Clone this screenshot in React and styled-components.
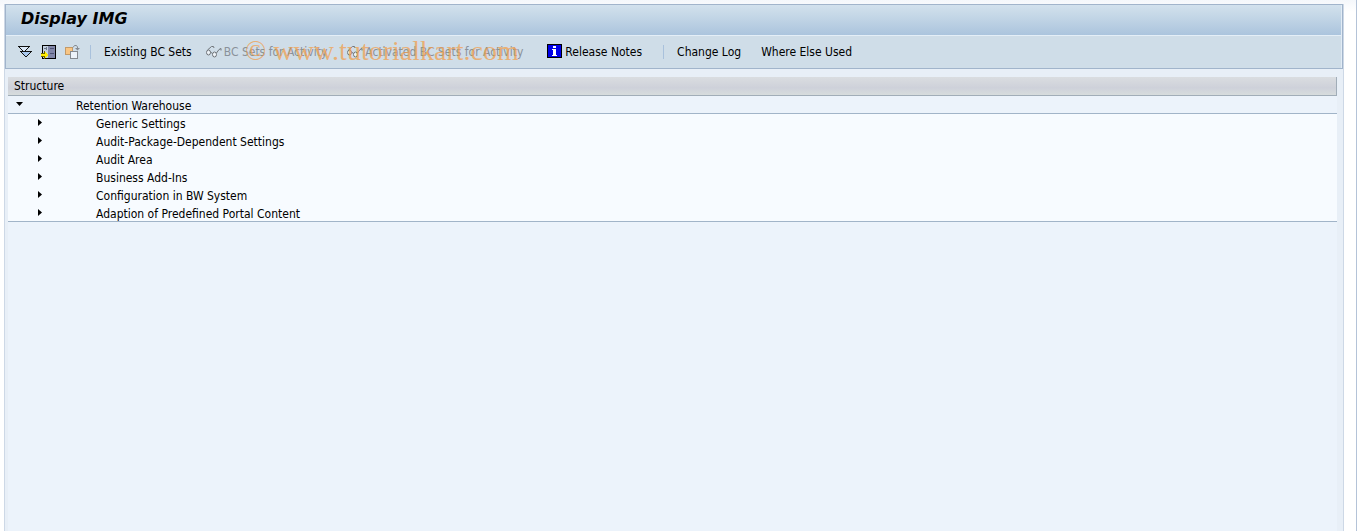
import React, { useState } from 'react';
import styled, { createGlobalStyle } from 'styled-components';

const GlobalStyle = createGlobalStyle`
    body {
        margin: 0;
        background: #fff;
        color: #000;
        font-family: 'DejaVu Sans Condensed', Tahoma, 'DejaVu Sans', sans-serif;
        font-size: 12px;
    }
`

const Page = styled.div`
    box-sizing: border-box;
    min-height: 100vh;
    display: flex;
    flex-direction: column;
    padding: 4px 12px 0 4px;
    border-right: 1px solid #b4c3d8;
    background: linear-gradient(#f4f7fb, #fff 12px);
`

const Panel = styled.div`
    flex: 1;
    display: flex;
    flex-direction: column;
    border: solid #cdd8e6;
    border-width: 0 1px;
    background: #e8eff7;
`

const Header = styled.header`
    position: relative;
    border: 1px solid #a1b4cb;
    background: #cfdde8;
    box-shadow: inset -1px 1px #e2ecf6;
`

const Title = styled.h1`
    margin: 0 1px 0 0;
    padding-left: 15px;
    border-bottom: 1px solid #e4eef7;
    background: linear-gradient(#d2e1ed, #c3d6e6 40%, #abc4dd);
    font-family: 'DejaVu Sans', Verdana, sans-serif;
    font-size: 16px;
    font-style: italic;
    font-weight: bold;
    line-height: 28px;
    padding-bottom: 2px;
`

const Toolbar = styled.div`
    display: flex;
    align-items: center;
    height: 32px;
    padding-left: 11px;
`

const Tool = styled.button`
    display: flex;
    align-items: center;
    gap: 2px;
    padding: 0 ${props => props.$end || 8}px 0 0;
    border: 0;
    background: none;
    color: #000;
    font: inherit;
    line-height: 16px;
    white-space: nowrap;

    &:disabled {
        color: #8a919a;
    }
`

const Separator = styled.span`
    width: 1px;
    height: 14px;
    margin: 0 13px 0 1px;
    background: #a9c1dc;
`

const Icon = styled.svg`
    display: block;
    flex: none;
    width: 16px;
    height: 16px;
    shape-rendering: ${props => props.$smooth ? 'auto' : 'crispEdges'};
`

const Watermark = styled.span`
    position: absolute;
    left: 239px;
    bottom: 1px;
    color: rgba(240, 160, 80, 0.75);
    font-family: 'Liberation Serif', serif;
    font-size: 28px;
    line-height: 32px;
    white-space: nowrap;
    pointer-events: none;
`

const Content = styled.main`
    flex: 1;
    margin: 8px 6px 0 3px;
    background: #ecf3fb;
`

const ColumnHead = styled.div`
    padding: 1px 0 0 6px;
    border: solid #a1adb8;
    border-width: 0 1px 1px 0;
    background: linear-gradient(#dadde0, #ced1da 60%, #d7dcdd);
    line-height: 17px;
`

const Tree = styled.ul`
    margin: 0;
    padding: 0;
    list-style: none;
`

const Branch = styled(Tree)`
    background: #f7fbff;
    box-shadow: inset 0 -1px #a1b4c8;
`

const Row = styled.div`
    display: flex;
    align-items: center;
    height: ${props => props.$root ? 17 : 18}px;
    padding-left: ${props => props.$root ? 7 : 27}px;
    border-bottom: ${props => props.$root ? '1px solid #a1b4c8' : '0'};
    line-height: 18px;
`

const Label = styled.span`
    padding-top: 2px;
`

const Toggle = styled.button`
    width: 9px;
    height: 16px;
    margin-right: 52px;
    padding: 0;
    border: 0;
    background: none;
`

const Marker = styled.svg`
    display: block;
    width: 9px;
    height: 16px;
`

const ExpandIcon = () => (
    <Icon viewBox="0 0 16 16">
        <path d="M1 2H13V3H12V4H11V5H10V6H9V7H8V8H6V7H5V6H4V5H3V4H2V3H1Z" fill="#111"/>
        <path d="M3 3H11V4H10V5H9V6H8V7H6V6H5V5H4V4H3Z" fill="#dbe8f7"/>
        <path d="M3 7H15V8H14V9H13V10H12V11H11V12H10V13H8V12H7V11H6V10H5V9H4V8H3Z" fill="#111"/>
        <path d="M5 8H13V9H12V10H11V11H10V12H8V11H7V10H6V9H5Z" fill="#a9c8ee"/>
    </Icon>
);

const PositionIcon = () => (
    <Icon viewBox="0 0 16 16">
        <path d="M1 1H15V15H1Z" fill="#000"/>
        <path d="M2 2H7V14H2Z" fill="#c3d0df"/>
        <path d="M7 2H14V14H7Z" fill="#8186a8"/>
        <path d="M9 4H13V5H9ZM9 9H13V10H9Z" fill="#4d5275"/>
        <path d="M3 4H5V5H3ZM5 3H6V6H5Z" fill="#6d7788"/>
        <path d="M0 9H3V7H4V8H5V9H6V10H7V12H6V13H5V14H4V15H3V13H0Z" fill="#6b6200"/>
        <path d="M0 10H4V8H5V9H6V10H7V12H6V13H5V14H4V12H0Z" fill="#ffec00"/>
    </Icon>
);

const CopyIcon = () => (
    <Icon viewBox="0 0 16 16" $smooth>
        <rect x="0.5" y="3.5" width="7" height="7" fill="#f9c583" stroke="#c39a68"/>
        <rect x="5.5" y="7.5" width="7" height="7" fill="#edf3fa" stroke="#858a91"/>
        <path d="M8 3.5L9.5 1.5H11.5L12.5 3V5" fill="none" stroke="#858a91"/>
        <path d="M10 4H15L12.5 6.5Z" fill="#858a91"/>
    </Icon>
);

const GlassesIcon = () => (
    <Icon viewBox="0 0 16 16" $smooth fill="none" stroke="#70757a">
        <ellipse cx="2.5" cy="8.5" rx="2" ry="2.5" fill="#edf2f7"/>
        <ellipse cx="8.5" cy="10.5" rx="2" ry="2.5" fill="#edf2f7"/>
        <path d="M4.5 8L6.5 9.5M1.5 6L5.5 2.5H7.5L8 4M10.5 9L13 5.5L15 4.5V6.5"/>
    </Icon>
);

const InfoIcon = () => (
    <Icon viewBox="0 0 16 16">
        <path d="M0 0H15V14H0Z" fill="#000"/>
        <path d="M1 1H14V13H1Z" fill="#0000e8"/>
        <path d="M6 2H9V4H6ZM5 5H9V11H10V12H5V11H6V6H5Z" fill="#fff"/>
    </Icon>
);

const Arrow = ({open}) => (
    <Marker viewBox="0 0 9 16">
        <path d={open ? 'M1 5H8L4.5 9Z' : 'M3 4V11L7 7.5Z'} fill="#000"/>
    </Marker>
);

const activities = [
    'Generic Settings',
    'Audit-Package-Dependent Settings',
    'Audit Area',
    'Business Add-Ins',
    'Configuration in BW System',
    'Adaption of Predefined Portal Content',
];

const App = () => {
    const [open, setOpen] = useState(true);

    return (
        <Page>
            <GlobalStyle/>
            <Panel>
                <Header>
                    <Title>Display IMG</Title>
                    <Toolbar>
                        <Tool aria-label="Expand subtree"><ExpandIcon/></Tool>
                        <Tool aria-label="Position"><PositionIcon/></Tool>
                        <Tool aria-label="Copy" disabled><CopyIcon/></Tool>
                        <Separator/>
                        <Tool $end={14}>Existing BC Sets</Tool>
                        <Tool $end={20} disabled><GlassesIcon/>BC Sets for Activity</Tool>
                        <Tool $end={24} disabled><GlassesIcon/>Activated BC Sets for Activity</Tool>
                        <Tool $end={20}><InfoIcon/>Release Notes</Tool>
                        <Separator/>
                        <Tool $end={20}>Change Log</Tool>
                        <Tool>Where Else Used</Tool>
                    </Toolbar>
                    <Watermark>© www.tutorialkart.com</Watermark>
                </Header>
                <Content>
                    <ColumnHead>Structure</ColumnHead>
                    <Tree>
                        <li>
                            <Row $root>
                                <Toggle aria-label="Retention Warehouse" aria-expanded={open} onClick={() => setOpen(!open)}>
                                    <Arrow open={open}/>
                                </Toggle>
                                <Label>Retention Warehouse</Label>
                            </Row>
                            {open && (
                                <Branch>
                                    {activities.map(name => (
                                        <li key={name}>
                                            <Row>
                                                <Toggle aria-label={name} aria-expanded={false}><Arrow/></Toggle>
                                                <Label>{name}</Label>
                                            </Row>
                                        </li>
                                    ))}
                                </Branch>
                            )}
                        </li>
                    </Tree>
                </Content>
            </Panel>
        </Page>
    );
}

export default App;
